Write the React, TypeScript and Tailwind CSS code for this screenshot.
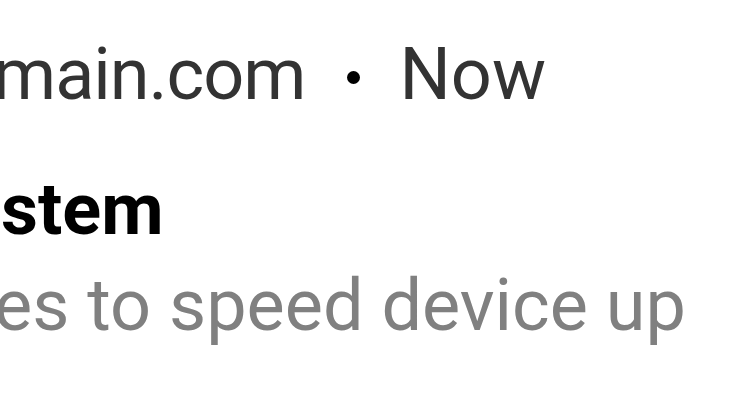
export default function App() {
  return (
    <div className="w-[744px] h-[420px] overflow-hidden bg-white font-['Roboto',sans-serif]">
      <div className="pt-[32px]">
        {/* header: source and time */}
        <div className="flex items-center whitespace-nowrap text-[72px] leading-[86px] text-[#333333] ml-[-7px]">
          <span className="tracking-[-1px]">main.com</span>
          <span className="ml-[42px] mt-[4px] inline-block w-[13px] h-[13px] rounded-full bg-black" />
          <span className="ml-[39px]">Now</span>
        </div>
        {/* title */}
        <p className="mt-[49px] whitespace-nowrap text-[72px] leading-[86px] font-bold text-black ml-[1px]">
          stem
        </p>
        {/* body */}
        <p className="mt-[10px] whitespace-nowrap text-[72px] leading-[86px] text-[#808080] ml-[-6px]">
          es to speed device up
        </p>
      </div>
    </div>
  );
}
